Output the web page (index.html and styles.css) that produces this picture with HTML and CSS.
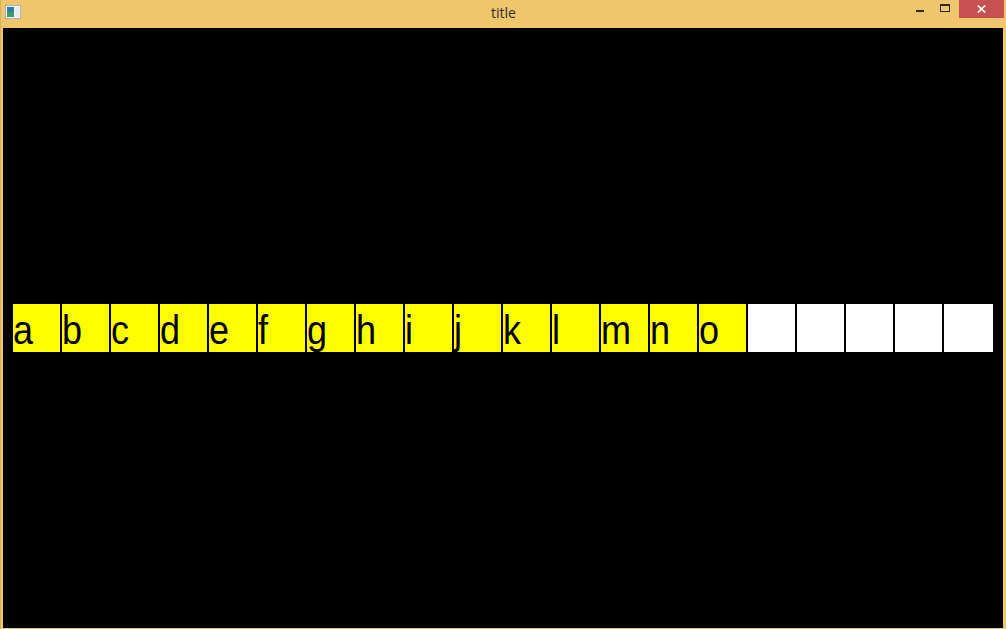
FILE: index.html
```html
<!DOCTYPE html>
<html>
<head>
<meta charset="utf-8">
<title>title</title>
<link rel="stylesheet" href="styles.css">
</head>
<body>
<div class="window">
  <div class="titlebar">
    <div class="app-icon">
      <svg width="16" height="14" viewBox="0 0 16 14">
        <rect x="0.5" y="0.5" width="15" height="13" fill="#f4f4f4" stroke="#a9b3b8"/>
        <rect x="2" y="2" width="7" height="10" fill="#2f7fa0"/>
        <rect x="2" y="7" width="7" height="5" fill="#3e9a6a"/>
        <rect x="10" y="2" width="4" height="10" fill="#e6ecef"/>
      </svg>
    </div>
    <div class="title">title</div>
    <div class="controls">
      <div class="btn btn-min"><span class="min-bar"></span></div>
      <div class="btn btn-max"><span class="max-box"></span></div>
      <div class="btn btn-close">
        <svg width="9" height="8" viewBox="0 0 9 8">
          <path d="M0.8 0.5 L8.2 7.5 M8.2 0.5 L0.8 7.5" stroke="#fff" stroke-width="1.7"/>
        </svg>
      </div>
    </div>
  </div>
  <div class="content">
    <div class="row">
      <div class="cell filled"><span class="glyph">a</span></div>
      <div class="cell filled"><span class="glyph">b</span></div>
      <div class="cell filled"><span class="glyph">c</span></div>
      <div class="cell filled"><span class="glyph">d</span></div>
      <div class="cell filled"><span class="glyph">e</span></div>
      <div class="cell filled"><span class="glyph">f</span></div>
      <div class="cell filled"><span class="glyph">g</span></div>
      <div class="cell filled"><span class="glyph">h</span></div>
      <div class="cell filled"><span class="glyph">i</span></div>
      <div class="cell filled"><span class="glyph">j</span></div>
      <div class="cell filled"><span class="glyph">k</span></div>
      <div class="cell filled"><span class="glyph">l</span></div>
      <div class="cell filled"><span class="glyph">m</span></div>
      <div class="cell filled"><span class="glyph">n</span></div>
      <div class="cell filled"><span class="glyph">o</span></div>
      <div class="cell empty"></div>
      <div class="cell empty"></div>
      <div class="cell empty"></div>
      <div class="cell empty"></div>
      <div class="cell empty last"></div>
    </div>
  </div>
</div>
</body>
</html>
```
FILE: styles.css
```css
* { box-sizing: border-box; }
html, body {
  margin: 0;
  padding: 0;
  width: 1006px;
  height: 629px;
  overflow: hidden;
  background: #f0c66c;
}
.window {
  width: 1006px;
  height: 629px;
  display: flex;
  flex-direction: column;
  background: #f0c66c;
  border-left: 1px solid #dcb05a;
}
.titlebar {
  height: 28px;
  flex: none;
  display: flex;
  align-items: flex-start;
  position: relative;
}
.app-icon {
  width: 16px;
  height: 14px;
  margin: 5px 0 0 4px;
}
.app-icon svg { display: block; }
.title {
  position: absolute;
  left: 0;
  right: 0;
  top: 3px;
  text-align: center;
  font-family: "Open Sans", "Noto Sans", sans-serif;
  font-size: 14px;
  line-height: 20px;
  color: #2e2e2e;
}
.controls {
  margin-left: auto;
  display: flex;
  height: 18px;
  margin-right: 2px;
  position: relative;
}
.btn {
  height: 18px;
  display: flex;
  justify-content: center;
}
.btn-min { width: 26px; }
.min-bar {
  width: 8px;
  height: 2px;
  margin-top: 10px;
  margin-left: 3px;
  background: #2b2b2b;
}
.btn-max { width: 28px; }
.max-box {
  width: 10px;
  height: 8px;
  margin-top: 4px;
  border: 1px solid #2b2b2b;
  border-top-width: 2px;
}
.btn-close {
  width: 45px;
  background: #c75050;
  align-items: center;
}
.btn-close svg { display: block; }
.content {
  flex: none;
  height: 600px;
  margin: 0 3px 1px 2px;
  background: #000;
  display: flex;
  align-items: center;
  padding-left: 10px;
}
.row {
  display: flex;
  gap: 2px;
}
.cell {
  width: 47px;
  height: 48px;
  overflow: hidden;
  font-family: "Liberation Sans", Arial, sans-serif;
  font-size: 40px;
  line-height: 52px;
  color: #000;
}
.glyph {
  display: inline-block;
  transform: scaleX(0.9);
  transform-origin: 0 50%;
}
.filled { background: #ffff00; }
.empty { background: #ffffff; }
.last { width: 49px; }
```
